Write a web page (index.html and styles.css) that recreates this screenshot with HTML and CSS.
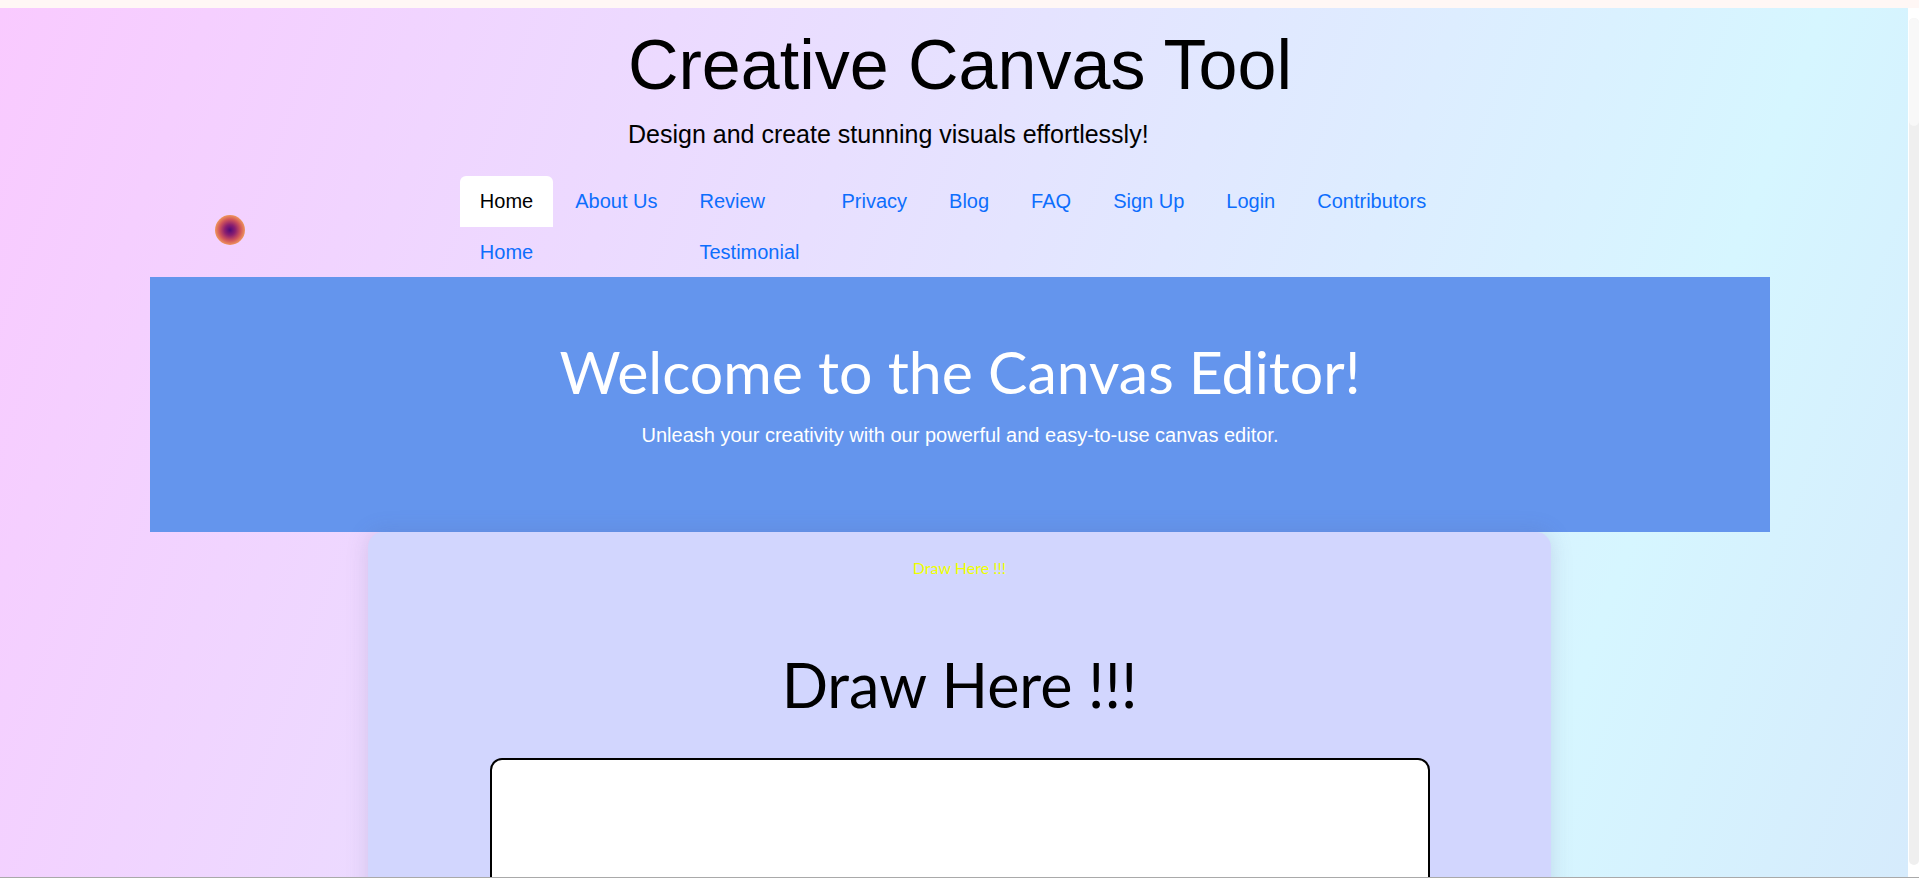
FILE: index.html
```html
<!DOCTYPE html>
<html lang="en">
<head>
<meta charset="utf-8">
<title>Creative Canvas Tool</title>
<link rel="stylesheet" href="styles.css">
</head>
<body>
<div class="viewport">
  <div class="page">
    <header class="header">
      <div class="brand">
        <h1 class="brand-title">Creative Canvas Tool</h1>
        <p class="brand-sub">Design and create stunning visuals effortlessly!</p>
      </div>
    </header>
    <nav class="nav">
      <ul class="nav-list">
        <li class="nav-item">
          <a class="nav-link active" href="#">Home</a>
          <a class="nav-link sub" href="#">Home</a>
        </li>
        <li class="nav-item"><a class="nav-link" href="#">About Us</a></li>
        <li class="nav-item">
          <a class="nav-link" href="#">Review</a>
          <a class="nav-link sub" href="#">Testimonial</a>
        </li>
        <li class="nav-item"><a class="nav-link" href="#">Privacy</a></li>
        <li class="nav-item"><a class="nav-link" href="#">Blog</a></li>
        <li class="nav-item"><a class="nav-link" href="#">FAQ</a></li>
        <li class="nav-item"><a class="nav-link" href="#">Sign Up</a></li>
        <li class="nav-item"><a class="nav-link" href="#">Login</a></li>
        <li class="nav-item"><a class="nav-link" href="#">Contributors</a></li>
      </ul>
    </nav>
    <section class="hero">
      <h2 class="hero-title">Welcome to the Canvas Editor!</h2>
      <p class="hero-sub">Unleash your creativity with our powerful and easy-to-use canvas editor.</p>
    </section>
    <section class="card">
      <p class="card-hint">Draw Here !!!</p>
      <h2 class="card-title">Draw Here !!!</h2>
      <div class="drawing"></div>
    </section>
    <div class="cursor-orb"></div>
  </div>
  <div class="scrollbar"><div class="scroll-track"><div class="scroll-thumb"></div></div></div>
</div>
<div class="bottom-line"></div>
</body>
</html>
```

FILE: styles.css
```css
* { box-sizing: border-box; }

html, body {
  margin: 0;
  padding: 0;
}

body {
  height: 878px;
  overflow: hidden;
  background: #fff7f5;
  padding-top: 8px;
  font-family: "Liberation Sans", Arial, sans-serif;
  color: #000;
  display: flex;
  flex-direction: column;
}

.viewport {
  display: flex;
  height: 869px;
}

.page {
  flex: 1;
  position: relative;
  overflow: hidden;
  background: linear-gradient(110deg, #f9caff 0%, #e8dfff 40%, #d6f6ff 82%, #d6ebfc 100%);
}

.scrollbar {
  width: 11px;
  background: #ffffff;
  padding: 10px 0 12px 1px;
}

.scroll-track {
  height: 100%;
  background: #efefef;
  border-radius: 6px;
}

.scroll-thumb {
  height: 108px;
  background: #f8f8f8;
  border-radius: 6px;
}

.bottom-line {
  height: 1px;
  background: #a9a9a9;
}

/* header */
.header {
  display: flex;
  justify-content: center;
  padding: 17px 0 0 12px;
}

.brand-title {
  margin: 0;
  font-weight: normal;
  font-size: 70px;
  line-height: 80px;
}

.brand-sub {
  margin: 15px 0 0;
  font-size: 25px;
  line-height: 29px;
}

/* nav */
.nav {
  margin-top: 27px;
}

.nav-list {
  list-style: none;
  margin: 0;
  padding: 0 2px 0 0;
  display: flex;
  justify-content: center;
  align-items: flex-start;
  gap: 2px;
}

.nav-item {
  display: flex;
  flex-direction: column;
}

.nav-link {
  display: block;
  padding: 14px 20px;
  font-size: 20px;
  line-height: 23px;
  color: #0d6efd;
  text-decoration: none;
  border-radius: 6px 6px 0 0;
}

.nav-link.sub {
  padding-bottom: 13px;
}

.nav-link.active {
  background: #ffffff;
  color: #000;
}

/* hero */
.hero {
  margin-left: 150px;
  width: 1620px;
  height: 255px;
  background: #6495ed;
  color: #fff;
  text-align: center;
  padding-top: 59px;
}

.hero-title {
  margin: 0;
  font-family: Lato, "Liberation Sans", sans-serif;
  font-weight: normal;
  font-size: 59px;
  line-height: 71px;
}

.hero-sub {
  margin: 17px 0 0;
  font-size: 20px;
  line-height: 23px;
}

/* card */
.card {
  margin-left: 368px;
  width: 1183px;
  height: 600px;
  background: #d2d6fe;
  border-radius: 15px 15px 0 0;
  box-shadow: 0 0 22px rgba(90, 90, 140, 0.18);
  padding-top: 26px;
  display: flex;
  flex-direction: column;
  align-items: center;
}

.card-hint {
  margin: 0;
  font-family: Lato, "Liberation Sans", sans-serif;
  font-size: 16px;
  line-height: 19px;
  color: #eeff00;
}

.card-title {
  margin: 71px 0 0;
  font-family: Lato, "Liberation Sans", sans-serif;
  font-weight: normal;
  font-size: 61px;
  line-height: 73px;
}

.drawing {
  margin-top: 37px;
  width: 940px;
  height: 420px;
  background: #fff;
  border: 2px solid #000;
  border-radius: 12px;
}

/* decorative cursor orb */
.cursor-orb {
  position: absolute;
  left: 215px;
  top: 207px;
  width: 30px;
  height: 30px;
  border-radius: 50%;
  background: radial-gradient(circle, #4e0a78 0%, #8a1f70 25%, #d0545a 50%, #f19a5c 72%, #f8b86c 100%);
}
```
